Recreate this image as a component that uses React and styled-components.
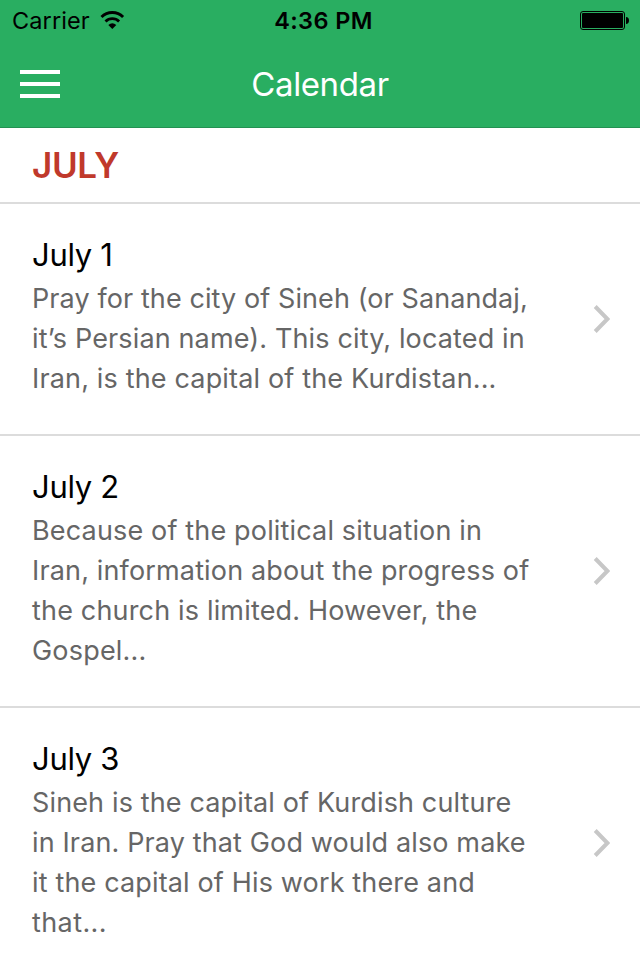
import React from "react";
import styled, { createGlobalStyle } from 'styled-components';

const GlobalStyle = createGlobalStyle`
    body {
        margin: 0;
        background-color: white;
        font-family: Inter, "Liberation Sans", sans-serif;
        overflow: hidden;
    }
`

const Screen = styled.div`
    width: 640px;
    height: 960px;
    overflow: hidden;
    background-color: white;
`

const Header = styled.header`
    box-sizing: border-box;
    height: 128px;
    background-color: #29ae61;
    border-bottom: 1px solid #239152;
`

const StatusBar = styled.div`
    display: grid;
    grid-template-columns: 1fr auto 1fr;
    align-items: center;
    height: 40px;
    padding: 0 11px 0 12px;
    line-height: 42px;
    font-size: 23.5px;
    color: black;
`

const Carrier = styled.div`
    display: flex;
    align-items: center;
    gap: 10.5px;
    letter-spacing: 0.1px;
`

const Clock = styled.div`
    font-weight: 600;
    letter-spacing: 0.4px;
    padding-left: 6px;
`

const Wifi = styled.svg`
    margin-bottom: 2px;
`

const Battery = styled.svg`
    justify-self: end;
    margin-bottom: 2px;
`

const NavBar = styled.div`
    display: grid;
    grid-template-columns: 40px 1fr 40px;
    align-items: center;
    height: 88px;
    padding: 0 20px;
`

const MenuButton = styled.button`
    display: flex;
    flex-direction: column;
    gap: 8px;
    padding: 0;
    border: none;
    background: none;
`

const MenuLine = styled.span`
    height: 4px;
    width: 40px;
    background-color: white;
`

const NavTitle = styled.h1`
    margin: 0;
    text-align: center;
    font-size: 33px;
    font-weight: 400;
    letter-spacing: -0.4px;
    line-height: 88px;
    color: white;
`

const MonthHeader = styled.h2`
    box-sizing: border-box;
    height: 76px;
    margin: 0;
    padding: 0 32px;
    border-bottom: 2px solid #dcdcdc;
    font-size: 35px;
    font-weight: 600;
    letter-spacing: -0.4px;
    line-height: 75px;
    color: #c0392b;
`

const DayRow = styled.article`
    display: flex;
    align-items: center;
    justify-content: space-between;
    padding: 0 30px 0 32px;
    border-bottom: 2px solid #dcdcdc;
`

const DayText = styled.div`
    padding: 31px 0 35px;
`

const DayTitle = styled.h3`
    margin: 0 0 4px;
    font-size: 31px;
    font-weight: 400;
    letter-spacing: -0.3px;
    line-height: 40px;
    color: black;
`

const Line = styled.div`
    font-size: 27px;
    line-height: 40px;
    color: #666;
    white-space: nowrap;
    letter-spacing: ${props => props.$spacing || 0}px;
`

const Chevron = styled.svg`
    flex: none;
`

const days = [
    {
        title: 'July 1',
        lines: [
            ['Pray for the city of Sineh (or Sanandaj,', 0.09],
            ['it’s Persian name). This city, located in', 0.14],
            ['Iran, is the capital of the Kurdistan...', 0.16]
        ]
    },
    {
        title: 'July 2',
        lines: [
            ['Because of the political situation in', 0.16],
            ['Iran, information about the progress of', 0.15],
            ['the church is limited. However, the', 0.17],
            ['Gospel...', 0.2]
        ]
    },
    {
        title: 'July 3',
        lines: [
            ['Sineh is the capital of Kurdish culture', 0.14],
            ['in Iran. Pray that God would also make', 0.13],
            ['it the capital of His work there and', 0.15],
            ['that...', 0.4]
        ]
    }
];

const WifiIcon = () => (
    <Wifi width="25" height="20" viewBox="0 0 25 20">
        <path d="M1.5 7A15.2 15.2 0 0 1 23.1 7" fill="none" stroke="black" strokeWidth="2.9" />
        <path d="M5.5 11.4A9.8 9.8 0 0 1 19.1 11.4" fill="none" stroke="black" strokeWidth="2.8" />
        <path d="M12.3 19L8.3 15A6.2 6.2 0 0 1 16.3 15Z" fill="black" />
    </Wifi>
);

const BatteryIcon = () => (
    <Battery width="49" height="20" viewBox="0 0 49 20">
        <rect x="0.5" y="1.5" width="44" height="18" rx="2.5" fill="none" stroke="black" />
        <rect x="2" y="3" width="41" height="15" rx="1" fill="black" />
        <path d="M46 7C48 7 49 8.5 49 10.5S48 14 46 14Z" fill="black" />
    </Battery>
);

const Day = ({ day }) => (
    <DayRow>
        <DayText>
            <DayTitle>{day.title}</DayTitle>
            {day.lines.map(([text, spacing]) => (
                <Line key={text} $spacing={spacing}>{text}</Line>
            ))}
        </DayText>
        <Chevron width="17" height="28" viewBox="0 0 17 28">
            <path d="M2.2 1.5L14.4 14L2.2 26.5" fill="none" stroke="#c7c7c7" strokeWidth="4" />
        </Chevron>
    </DayRow>
);

class App extends React.Component {
    render() {
        return (
            <Screen>
                <GlobalStyle />
                <Header>
                    <StatusBar>
                        <Carrier>
                            Carrier
                            <WifiIcon />
                        </Carrier>
                        <Clock>4:36 PM</Clock>
                        <BatteryIcon />
                    </StatusBar>
                    <NavBar>
                        <MenuButton aria-label="Menu">
                            <MenuLine />
                            <MenuLine />
                            <MenuLine />
                        </MenuButton>
                        <NavTitle>Calendar</NavTitle>
                    </NavBar>
                </Header>
                <MonthHeader>JULY</MonthHeader>
                {days.map(day => <Day key={day.title} day={day} />)}
            </Screen>
        );
    }
}

export default App;
